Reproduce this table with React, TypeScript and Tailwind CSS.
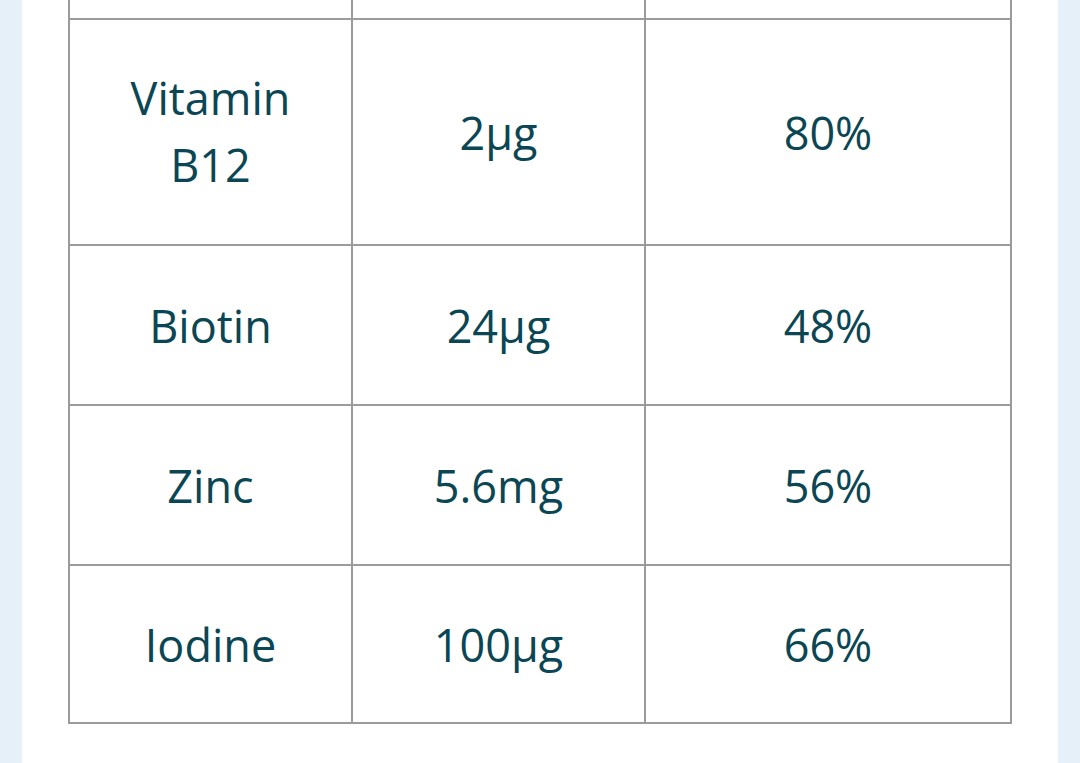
const rows = [
  { name: ["Vitamin", "B12"], amount: "2µg", ri: "80%", h: "h-[226px]", lift: "pb-[3px]" },
  { name: ["Biotin"], amount: "24µg", ri: "48%", h: "h-[160px]", lift: "" },
  { name: ["Zinc"], amount: "5.6mg", ri: "56%", h: "h-[160px]", lift: "" },
  { name: ["Iodine"], amount: "100µg", ri: "66%", h: "h-[158px]", lift: "" },
];

const cell =
  "flex flex-col items-center justify-center border-r-2 border-b-2 border-[#9b9b9b] text-center";

export default function App() {
  return (
    <div className="min-h-[763px] w-full bg-[#e6f0f8] px-[22px]" style={{ fontFamily: '"Open Sans", "Noto Sans", sans-serif' }}>
      <div className="min-h-[763px] bg-white pl-[46px]">
        <div className="grid w-[944px] grid-cols-[283px_293px_366px] border-l-2 border-[#9b9b9b] text-[45px] leading-[67px] text-[#0a4653]">
          {/* tail of the previous row */}
          <div className={`${cell} h-[20px]`} />
          <div className={`${cell} h-[20px]`} />
          <div className={`${cell} h-[20px]`} />
          {rows.map((r) => (
            <div key={r.amount} className="contents">
              <div className={`${cell} ${r.h} ${r.lift}`}>
                {r.name.map((line) => (
                  <span key={line}>{line}</span>
                ))}
              </div>
              <div className={`${cell} ${r.h}`}>{r.amount}</div>
              <div className={`${cell} ${r.h}`}>{r.ri}</div>
            </div>
          ))}
        </div>
      </div>
    </div>
  );
}
